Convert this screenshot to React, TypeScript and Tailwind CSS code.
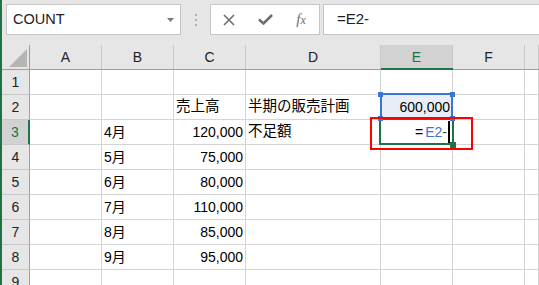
import type { ReactNode } from 'react'

const FONT = "font-['Liberation_Sans','Noto_Sans_CJK_JP',sans-serif]"

type Col = { key: string; w: string }
const COLS: Col[] = [
  { key: 'A', w: 'w-[72px]' },
  { key: 'B', w: 'w-[72px]' },
  { key: 'C', w: 'w-[72px]' },
  { key: 'D', w: 'w-[135px]' },
  { key: 'E', w: 'w-[72px]' },
  { key: 'F', w: 'w-[72px]' },
  { key: 'G', w: 'flex-1' },
]

type CellData = { text?: ReactNode; align?: 'left' | 'right'; ja?: boolean }
type RowData = { n: number; cells: Record<string, CellData> }

const ROWS: RowData[] = [
  { n: 1, cells: {} },
  {
    n: 2,
    cells: {
      C: { text: '売上高', ja: true },
      D: { text: '半期の販売計画', ja: true },
      E: { text: '600,000', align: 'right' },
    },
  },
  {
    n: 3,
    cells: {
      B: { text: '4月' },
      C: { text: '120,000', align: 'right' },
      D: { text: '不足額', ja: true },
    },
  },
  { n: 4, cells: { B: { text: '5月' }, C: { text: '75,000', align: 'right' } } },
  { n: 5, cells: { B: { text: '6月' }, C: { text: '80,000', align: 'right' } } },
  { n: 6, cells: { B: { text: '7月' }, C: { text: '110,000', align: 'right' } } },
  { n: 7, cells: { B: { text: '8月' }, C: { text: '85,000', align: 'right' } } },
  { n: 8, cells: { B: { text: '9月' }, C: { text: '95,000', align: 'right' } } },
  { n: 9, cells: {} },
]

function FormulaBar() {
  return (
    <div className="flex h-[45px] items-start bg-[#e6e6e6] pl-[4px] pt-[4px]">
      {/* name box */}
      <div className="flex h-[31px] w-[175px] items-center justify-between border border-[#c6c6c6] bg-white pl-[6px] pr-[6px]">
        <span className="text-[14.5px] text-[#222]">COUNT</span>
        <svg width="7" height="4" viewBox="0 0 7 4">
          <path d="M0 0 L7 0 L3.5 4 Z" fill="#7a7a7a" />
        </svg>
      </div>

      <div className="flex h-[31px] w-[29px] flex-col items-center justify-center gap-[3px]">
        <span className="h-[2px] w-[2px] bg-[#b0b0b0]" />
        <span className="h-[2px] w-[2px] bg-[#b0b0b0]" />
        <span className="h-[2px] w-[2px] bg-[#b0b0b0]" />
      </div>

      {/* cancel / enter / fx */}
      <div className="flex h-[31px] w-[110px] items-center border border-[#c6c6c6] bg-white">
        <div className="flex flex-1 justify-center">
          <svg width="12" height="12" viewBox="0 0 12 12">
            <path d="M1 1 L11 11 M11 1 L1 11" stroke="#6e6e6e" strokeWidth="1.6" />
          </svg>
        </div>
        <div className="flex flex-1 justify-center">
          <svg width="15" height="11" viewBox="0 0 15 11">
            <path d="M1 5.5 L5.5 9.5 L14 1" stroke="#6e6e6e" strokeWidth="2.6" fill="none" />
          </svg>
        </div>
        <div className="flex flex-1 justify-center">
          <span className="font-['Liberation_Serif',serif] text-[15px] italic leading-none text-[#6e6e6e]">
            f<span className="text-[12px]">x</span>
          </span>
        </div>
      </div>

      <div className="ml-[3px] flex h-[31px] flex-1 items-center border-y border-l border-[#c6c6c6] bg-white pl-[13px]">
        <span className="text-[15px] text-[#222]">=E2-</span>
      </div>
    </div>
  )
}

function HeaderRow() {
  return (
    <div className="flex h-[25px] border-b border-[#9e9e9e] bg-[#e6e6e6]">
      <div className="flex w-[28px] items-end justify-end border-r border-[#9e9e9e] pb-[2px] pr-[2px]">
        <svg width="18" height="18" viewBox="0 0 18 18">
          <path d="M18 0 L18 18 L0 18 Z" fill="#b5b5b5" />
        </svg>
      </div>
      {COLS.map(c => (
        <div
          key={c.key}
          className={`${c.w} relative flex items-center justify-center border-r border-[#c8c8c8] text-[14px] ${
            c.key === 'E' ? 'bg-[#d2d2d2] text-[#217346]' : 'text-[#222]'
          }`}
        >
          {c.key === 'G' ? '' : c.key}
          {c.key === 'E' && <span className="absolute -bottom-px left-0 right-[-1px] h-[2px] bg-[#217346]" />}
        </div>
      ))}
    </div>
  )
}

function E2Overlay() {
  return (
    <div className="pointer-events-none absolute -left-px -right-px -top-[2px] bottom-0 z-20">
      <div className="absolute inset-0 border-2 border-[#3b76d3]" />
      <span className="absolute -left-[2px] -top-[1px] h-[5px] w-[5px] bg-[#3b76d3]" />
      <span className="absolute -right-[2px] -top-[1px] h-[5px] w-[5px] bg-[#3b76d3]" />
      <span className="absolute -bottom-[2px] -left-[2px] h-[5px] w-[5px] bg-[#3b76d3]" />
      <span className="absolute -bottom-[2px] -right-[2px] h-[5px] w-[5px] bg-[#3b76d3]" />
    </div>
  )
}

function E3Overlay() {
  return (
    <>
      <div className="pointer-events-none absolute -bottom-px -left-[2px] -right-[2px] -top-[2px] z-10 border-2 border-[#217346]" />
      <span className="pointer-events-none absolute -bottom-[4px] -right-[4px] z-10 h-[6px] w-[6px] bg-[#217346]" />
      <div className="pointer-events-none absolute -bottom-[6px] -left-[11px] -right-[21px] -top-[3px] z-30 border-2 border-[#ff0000]" />
    </>
  )
}

function Row({ row }: { row: RowData }) {
  const active = row.n === 3
  return (
    <div className="flex h-[25px]">
      <div
        className={`flex w-[28px] items-center justify-center border-b border-[#c8c8c8] text-[14px] ${
          active
            ? 'border-r-2 border-r-[#217346] bg-[#d2d2d2] text-[#217346]'
            : 'border-r border-r-[#9e9e9e] bg-[#e6e6e6] text-[#222]'
        }`}
      >
        {row.n}
      </div>
      {COLS.map(c => {
        const cell = row.cells[c.key] ?? {}
        const isE2 = row.n === 2 && c.key === 'E'
        const isE3 = row.n === 3 && c.key === 'E'
        return (
          <div
            key={c.key}
            className={`${c.w} relative flex items-center whitespace-nowrap border-b border-r border-[#d4d4d4] ${
              cell.align === 'right' || isE3 ? 'justify-end pr-[2px]' : 'justify-start pl-[2px]'
            } ${cell.ja ? 'text-[14.5px]' : 'text-[14px]'} ${isE2 ? 'bg-[#e8eef8]' : 'bg-white'} text-black`}
          >
            {isE3 ? (
              <span className="flex h-full items-center text-[14px]">
                <span className="mr-[2px]">=</span>
                <span className="text-[#3a78d4]">E2</span>
                <span className="text-[#444]">-</span>
                <span className="ml-px h-[22px] w-[2px] bg-black" />
              </span>
            ) : (
              cell.text
            )}
            {isE2 && <E2Overlay />}
            {isE3 && <E3Overlay />}
          </div>
        )
      })}
    </div>
  )
}

export default function App() {
  return (
    <div className={`${FONT} h-[285px] w-[539px] overflow-hidden border-l-2 border-[#217346] bg-white`}>
      <FormulaBar />
      <HeaderRow />
      {ROWS.map(r => (
        <Row key={r.n} row={r} />
      ))}
    </div>
  )
}
